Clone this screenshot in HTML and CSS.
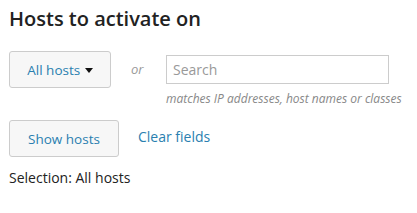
FILE: index.html
```html
<!DOCTYPE html>
<html lang="en">
<head>
  <meta charset="UTF-8">
  <title>Hosts to activate on</title>
  <link rel="stylesheet" href="styles.css">
</head>
<body>

<h1>Hosts to activate on</h1>

<div class="host-filter">
  <button class="btn dropdown">All hosts <span class="caret"></span></button>
  <span class="or">or</span>
  <div class="search-box">
    <input type="text" placeholder="Search">
    <div class="hint">matches IP addresses, host names or classes</div>
  </div>
</div>

<div class="actions">
  <button class="btn show">Show hosts</button>
  <a href="#" class="clear">Clear fields</a>
</div>

<p class="selection">Selection: All hosts</p>

</body>
</html>
```

FILE: styles.css
```css
body {
  margin: 0;
  padding: 9px;
  font-family: "Open Sans", sans-serif;
  color: #222;
  background-color: #fff;
}
h1 {
  font-size: 20px;
  font-weight: 600;
  color: #222;
  margin: 0 0 22px 0;
  line-height: 20px;
}
.host-filter {
  display: flex;
  align-items: flex-start;
}
.btn {
  font-family: "Open Sans", sans-serif;
  font-size: 13.5px;
  color: #2a7fb0;
  background-color: #f7f7f7;
  border: 1px solid #ccc;
  border-radius: 3px;
  height: 37px;
  cursor: pointer;
}
.dropdown {
  width: 102px;
  padding: 0;
}
.caret {
  display: inline-block;
  width: 0;
  height: 0;
  border-left: 4px solid transparent;
  border-right: 4px solid transparent;
  border-top: 5px solid #111;
  vertical-align: middle;
  margin-left: 1px;
}
.or {
  font-style: italic;
  font-size: 13px;
  color: #999;
  margin: 9px 0 0 20px;
  width: 35px;
}
.search-box {
  margin-top: 4px;
}
.search-box input {
  width: 223px;
  height: 29px;
  box-sizing: border-box;
  border: 1px solid #ccc;
  padding: 0 6px;
  font-family: "Open Sans", sans-serif;
  font-size: 14px;
}
.search-box input::placeholder {
  color: #999;
}
.hint {
  font-style: italic;
  font-size: 12px;
  color: #888;
  margin-top: 6px;
  white-space: nowrap;
}
.actions {
  display: flex;
  align-items: center;
  margin-top: 13px;
}
.show {
  width: 110px;
}
.clear {
  font-size: 14px;
  color: #2a7fb0;
  text-decoration: none;
  margin: 0 0 4px 19px;
}
.selection {
  font-size: 14px;
  margin: 11px 0 0 0;
}
```
